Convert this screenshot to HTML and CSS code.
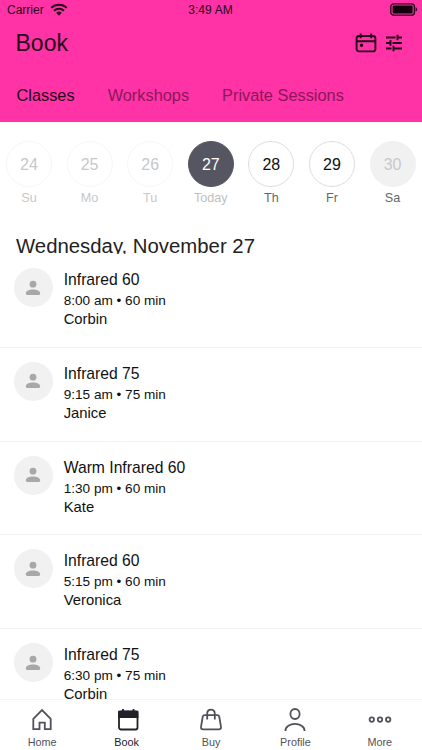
FILE: index.html
```html
<!DOCTYPE html>
<html lang="en">
<head>
<meta charset="utf-8">
<title>Book</title>
<link rel="stylesheet" href="styles.css">
</head>
<body>
<svg class="defs" width="0" height="0" aria-hidden="true">
  <symbol id="person" viewBox="0 0 16 16"><circle cx="8" cy="4.2" r="3.4"/><path d="M.8 13.300C.8 10.7 4.2 9.4 8 9.4s7.2 1.3 7.2 3.9c0 1-.5 1.700-1.500 1.700H2.300C1.300 15 .8 14.300.8 13.300z"/></symbol>
</svg>
<div class="app">
  <header class="header">
    <div class="status">
      <div class="carrier"><span>Carrier</span>
        <svg width="18" height="13" viewBox="0 0 18 13"><g fill="none" stroke="#26051a" stroke-width="2"><path d="M1.2 4.8a11.2 11.2 0 0 1 15.6 0"/><path d="M4 7.8a7.1 7.1 0 0 1 10 0"/></g><path d="M6.2 9.8a4 4 0 0 1 5.6 0L9 12.7z" fill="#26051a"/></svg>
      </div>
      <span class="time">3:49 AM</span>
      <svg class="battery" width="28" height="13" viewBox="0 0 28 13"><rect x=".8" y=".8" width="23.6" height="11.4" rx="2.7" fill="none" stroke="#26051a" stroke-width="1.3"/><rect x="2.6" y="2.6" width="20" height="7.8" rx="1" fill="#12000b"/><path d="M25.600 4.300c2 .7 2 3.700 0 4.400z" fill="#26051a"/></svg>
    </div>
    <div class="titlebar">
      <h1>Book</h1>
      <div class="actions">
        <svg width="22" height="20" viewBox="0 0 22 20" fill="none" stroke="#26051a" stroke-width="1.900"><rect x="1.600" y="3" width="18.800" height="15.400" rx="2.500"/><path d="M1.600 8.200h18.800M5.700.5v4.800M16.200.5v4.800"/><circle cx="6.500" cy="12.300" r="1" fill="#26051a" stroke-width="1.500"/></svg>
        <svg width="18" height="18" viewBox="0 0 18 18" fill="none" stroke="#26051a" stroke-width="1.900"><path d="M1 3.500h9.600M12.500 3.500H17M12.500.8v5.400M1 9h4.500M7.500 9H17M5.500 6.300v5.400M1 14.500h5.500M8.500 14.500H17M8.500 11.800v5.400"/></svg>
      </div>
    </div>
    <nav class="tabs"><span class="active">Classes</span><span>Workshops</span><span>Private Sessions</span></nav>
  </header>
  <section class="week">
    <div class="day past"><b>24</b><span>Su</span></div>
    <div class="day past"><b>25</b><span>Mo</span></div>
    <div class="day past"><b>26</b><span>Tu</span></div>
    <div class="day today"><b>27</b><span>Today</span></div>
    <div class="day"><b>28</b><span>Th</span></div>
    <div class="day"><b>29</b><span>Fr</span></div>
    <div class="day closed"><b>30</b><span>Sa</span></div>
  </section>
  <h2>Wednesday, November 27</h2>
  <main class="list">
    <article class="row"><div class="avatar"><svg><use href="#person"/></svg></div><div><h3>Infrared 60</h3><p class="when">8:00 am • 60 min</p><p class="who">Corbin</p></div></article>
    <article class="row"><div class="avatar"><svg><use href="#person"/></svg></div><div><h3>Infrared 75</h3><p class="when">9:15 am • 75 min</p><p class="who">Janice</p></div></article>
    <article class="row"><div class="avatar"><svg><use href="#person"/></svg></div><div><h3>Warm Infrared 60</h3><p class="when">1:30 pm • 60 min</p><p class="who">Kate</p></div></article>
    <article class="row"><div class="avatar"><svg><use href="#person"/></svg></div><div><h3>Infrared 60</h3><p class="when">5:15 pm • 60 min</p><p class="who">Veronica</p></div></article>
    <article class="row"><div class="avatar"><svg><use href="#person"/></svg></div><div><h3>Infrared 75</h3><p class="when">6:30 pm • 75 min</p><p class="who">Corbin</p></div></article>
  </main>
  <footer class="nav">
    <div class="item"><svg viewBox="0 0 24 24"><path d="M3.300 10.800 12 2l8.700 8.800v10.300h-5.900v-6.500H9.500v6.500H3.300z"/></svg><span>Home</span></div>
    <div class="item current"><svg viewBox="0 0 24 24"><rect x="4" y="3.300" width="18.500" height="18.200" rx="2"/><path class="solid" d="M4 3.600h18.500v5.600H4z"/><path d="M8 1v4M18.500 1v4"/></svg><span>Book</span></div>
    <div class="item"><svg viewBox="0 0 24 24"><path d="M5.800 7.200h12.400c1.200 0 1.900.6 2.100 1.700l1.700 10c.3 1.500-.6 2.400-2 2.400H4c-1.400 0-2.300-.9-2-2.400l1.700-10c.2-1.100.9-1.700 2.100-1.700zM8.200 11.500V5.500c0-5.300 7.600-5.300 7.600 0v6"/></svg><span>Buy</span></div>
    <div class="item"><svg viewBox="0 0 24 24"><ellipse cx="12" cy="6" rx="4.600" ry="5"/><path d="M2.400 23c0-9.400 19.200-9.400 19.200 0"/></svg><span>Profile</span></div>
    <div class="item"><svg viewBox="0 0 24 24"><circle cx="3.800" cy="11.600" r="2.200"/><circle cx="12" cy="11.600" r="2.200"/><circle cx="20.200" cy="11.600" r="2.200"/></svg><span>More</span></div>
  </footer>
</div>
</body>
</html>
```
FILE: styles.css
```css
* { box-sizing: border-box; }
body, h1, h2, h3, p { margin: 0; font-weight: 400; }
body { font-family: "Liberation Sans", Arial, sans-serif; color: #111; background: #fff; overflow: hidden; }
svg { display: block; flex: none; }
.defs { position: absolute; }
.app { width: 422px; height: 750px; display: flex; flex-direction: column; overflow: hidden; }

.header { flex: none; height: 122px; background: #ff33a5; color: #26051a; }
.status { height: 20px; display: grid; grid-template-columns: 1fr auto 1fr; padding: 0 4px 0 7px; font-size: 12px; line-height: 20px; }
.carrier { display: flex; gap: 6px; }
.carrier svg { margin-top: 3px; }
.time { line-height: 20px; letter-spacing: .1px; margin-left: -4px; }
.battery { justify-self: end; margin-top: 3px; }
.titlebar { height: 46px; display: flex; justify-content: space-between; align-items: center; padding: 0 19.5px 0 15.5px; }
h1 { font-size: 23px; line-height: 45px; }
.actions { display: flex; align-items: center; gap: 8px; }
.tabs { display: flex; gap: 33px; padding-left: 16.5px; font-size: 16.35px; line-height: 58px; color: #8c175c; }
.tabs .active { color: #26051a; }

.week { flex: none; height: 111px; padding: 19px 0 0 6px; display: flex; gap: 14.6px; }
.day { width: 46px; flex: none; display: flex; flex-direction: column; align-items: center; color: #666; }
.day b { width: 46px; height: 46px; border: 1px solid #ddd; border-radius: 50%; text-align: center; font-weight: 400; font-size: 16px; line-height: 46px; color: #111; }
.day span { font-size: 12.6px; line-height: 20px; margin-top: 1px; }
.past, .past b { color: #c8c8c8; }
.past b { border-color: #f6f6f6; }
.today { color: #c0c0c0; }
.today b { background: #555661; border-color: #555661; color: #fff; }
.closed b { background: #f1f1f1; border-color: #f1f1f1; color: #c8c8c8; }

h2 { flex: none; height: 21px; overflow: hidden; padding-left: 16px; font-size: 20.35px; line-height: 26px; color: #222; }
.list { flex: 1; min-height: 0; overflow: hidden; }
.row { height: 93.75px; display: flex; gap: 11.2px; padding: 14px 0 0 13.5px; border-bottom: 1px solid #f2f2f2; }
.avatar { width: 39px; height: 39px; flex: none; border-radius: 50%; background: #f1f1f1; display: grid; place-items: center; }
.avatar svg { width: 16px; height: 16px; fill: #a8a8a8; }
h3 { font-size: 15.7px; line-height: 24px; }
.when { font-size: 13.6px; line-height: 17px; }
.who { font-size: 14.8px; line-height: 20px; }

.nav { flex: none; height: 51px; border-top: 1px solid #f5f5f5; background: #fff; display: grid; grid-template-columns: repeat(5, 1fr); color: #50515b; }
.item { display: flex; flex-direction: column; align-items: center; padding-top: 8px; }
.item svg { width: 24px; height: 24px; fill: none; stroke: currentColor; stroke-width: 1.8; }
.item .solid { fill: currentColor; }
.item span { font-size: 10.8px; line-height: 20px; }
.current { color: #20212a; }
```
